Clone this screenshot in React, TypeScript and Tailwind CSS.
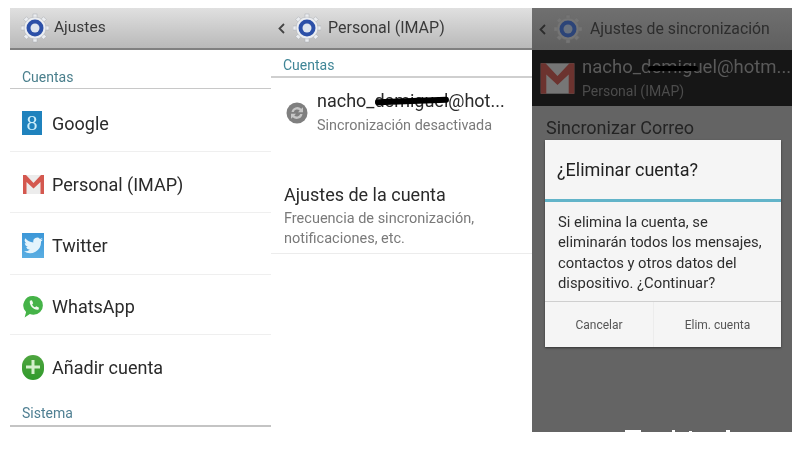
import type { ReactNode } from 'react';

const GearLogo = ({ dim = false }: { dim?: boolean }) => (
  <svg width="28" height="30" viewBox="0 0 28 30" className="shrink-0">
    <g fill={dim ? '#757575' : '#eceef1'} stroke={dim ? '#6a6a6a' : '#a9adb3'} strokeWidth="0.5">
      <rect x="12" y="1" width="4" height="28" />
      <rect x="0" y="13" width="28" height="4" />
      <rect x="12" y="1" width="4" height="28" transform="rotate(45 14 15)" />
      <rect x="12" y="1" width="4" height="28" transform="rotate(-45 14 15)" />
      <circle cx="14" cy="15" r="11" />
    </g>
    <circle cx="14" cy="15" r="8.500" fill={dim ? '#2c4478' : '#2c50a8'} />
    <circle cx="14" cy="15" r="4.500" fill={dim ? '#69727f' : '#dfe6ef'} />
  </svg>
);

const GoogleIcon = () => (
  <div className="w-5 h-6 bg-[#1f82bd] flex items-center justify-center text-[#cdeefa] text-[22px] leading-none font-['Liberation_Serif',serif]">
    8
  </div>
);

const GmailIcon = () => (
  <svg width="23" height="21" viewBox="0 0 23 21">
    <rect x="1" y="1" width="21" height="19" fill="#ececec" />
    <path d="M1 20V1h3l7.500 8 7.500-8h3v19h-3.500V8l-7 6.500-7-6.500v12z" fill="#d4584f" />
  </svg>
);

const TwitterIcon = () => (
  <div className="w-[22px] h-[25px] bg-gradient-to-b from-[#3c97d8] to-[#5aaee2] flex items-center justify-center">
    <svg width="19" height="17" viewBox="0 0 24 20" fill="#e4f4fc">
      <path d="M24 2.400a9.800 9.800 0 0 1-2.800.8 4.900 4.900 0 0 0 2.100-2.700 9.800 9.800 0 0 1-3.100 1.200A4.900 4.900 0 0 0 11.800 6.100 13.900 13.900 0 0 1 1.700.9a4.900 4.900 0 0 0 1.500 6.600 4.900 4.900 0 0 1-2.200-.6c0 2.400 1.700 4.400 3.900 4.900a4.900 4.900 0 0 1-2.200.1 4.900 4.900 0 0 0 4.600 3.400A9.900 9.900 0 0 1 0 17.300 13.900 13.900 0 0 0 21.500 5c1-.7 1.900-1.600 2.500-2.600z" />
    </svg>
  </div>
);

const WhatsAppIcon = () => (
  <svg width="21" height="24" viewBox="0 0 20 23" className="ml-[1px]">
    <path d="M10 1a9 9 0 0 1 0 18 9 9 0 0 1-3.500-.7L1.500 21.500l1.400-5.200A9 9 0 0 1 10 1z" fill="#45b348" />
    <path d="M6.500 5.500l2-.5 1.200 2.800-1 1.200c.6 1.300 1.500 2.200 2.800 2.800l1.200-1 2.600 1.300-.6 2c-4.500.7-9-4-8.200-8.600z" fill="#f1faf1" />
  </svg>
);

const AddIcon = () => (
  <div className="w-[22px] h-[25px] rounded-full bg-gradient-to-b from-[#4ea53f] to-[#2f9a2b] flex items-center justify-center">
    <svg width="16" height="16" viewBox="0 0 16 16" fill="#d4efcc">
      <rect x="6.500" y="1" width="3" height="14" />
      <rect x="1" y="6.500" width="14" height="3" />
    </svg>
  </div>
);

const SyncIcon = () => (
  <svg width="22" height="24" viewBox="0 0 22 24" className="shrink-0">
    <circle cx="11" cy="12" r="10.500" fill="#7f7f7f" />
    <path d="M5.500 11a5.800 5.800 0 0 1 9.800-3.200l1.700-1.600v5h-5l1.700-1.700A3.500 3.500 0 0 0 7.800 11zM16.500 13a5.800 5.800 0 0 1-9.800 3.200L5 17.800v-5h5l-1.700 1.700a3.500 3.500 0 0 0 5.900-1.500z" fill="#c6c6c6" />
  </svg>
);

const Chevron = ({ color }: { color: string }) => (
  <svg width="7" height="11" viewBox="0 0 7 11" fill="none" stroke={color} strokeWidth="1.800" className="shrink-0">
    <path d="M6 1L1.500 5.500 6 10" />
  </svg>
);

const TopBar = ({ children }: { children: ReactNode }) => (
  <div className="h-[42px] shrink-0 flex items-center bg-gradient-to-b from-[#e0e0e0] to-[#b9b9b9] border-b-2 border-[#808080]">
    {children}
  </div>
);

const accounts = [
  { name: 'Google', icon: <GoogleIcon />, row: 'h-[63px] pt-[6px]' },
  { name: 'Personal (IMAP)', icon: <GmailIcon />, row: 'h-[61px] pt-[4px]' },
  { name: 'Twitter', icon: <TwitterIcon />, row: 'h-[62px] pt-[4px]' },
  { name: 'WhatsApp', icon: <WhatsAppIcon />, row: 'h-[60px] pt-[4px]' },
];

const SettingsColumn = () => (
  <div className="w-[261px] flex flex-col">
    <TopBar>
      <div className="ml-[11px]"><GearLogo /></div>
      <span className="ml-[5px] text-[15.500px] text-[#3a3a3a]">Ajustes</span>
    </TopBar>
    <div className="h-[39px] shrink-0 flex items-end pl-3 pb-[1px] border-b border-[#c8c8c8]">
      <span className="text-[14px] leading-5 text-[#4a7f8c]">Cuentas</span>
    </div>
    {accounts.map((a) => (
      <div key={a.name} className={`${a.row} shrink-0 flex items-center pl-3 border-b border-[#efefef]`}>
        <div className="w-[30px] flex justify-start">{a.icon}</div>
        <span className="text-[18px] text-[#2a2a2a]">{a.name}</span>
      </div>
    ))}
    <div className="h-[62px] pt-[2px] shrink-0 flex items-center pl-3">
      <div className="w-[30px]"><AddIcon /></div>
      <span className="text-[18px] text-[#2a2a2a]">Añadir cuenta</span>
    </div>
    <div className="h-[30px] flex items-end pl-3 pb-[2px] border-b-2 border-[#c4c4c4]">
      <span className="text-[14px] leading-5 text-[#4f7f92]">Sistema</span>
    </div>
  </div>
);

const AccountColumn = () => (
  <div className="w-[261px] h-[424px] flex flex-col">
    <TopBar>
      <div className="ml-[7px]"><Chevron color="#444" /></div>
      <div className="ml-[8px]"><GearLogo /></div>
      <span className="ml-[7px] text-[16px] text-[#3a3a3a]">Personal (IMAP)</span>
    </TopBar>
    <div className="h-[28px] shrink-0 flex items-end pl-3 pb-[1px] border-b-2 border-[#cfcfcf]">
      <span className="text-[14px] leading-5 text-[#3f8596]">Cuentas</span>
    </div>
    <div className="flex items-center pl-[15px] pt-[11px]">
      <SyncIcon />
      <div className="ml-[9px] flex flex-col">
        <span className="relative text-[18px] leading-[24px] text-[#2a2a2a]">
          nacho_demiguel@hot...
          <span className="absolute left-[58px] top-[9px] w-[74px] h-[6px] bg-black -rotate-2 rounded-full" />
        </span>
        <span className="text-[14.400px] leading-[22px] mt-[2px] text-[#7a7a7a]">Sincronización desactivada</span>
      </div>
    </div>
    <div className="pl-[13px] mt-[45px] pb-[4px] border-b border-[#ececec] flex flex-col">
      <span className="text-[18px] leading-[26px] text-[#2a2a2a]">Ajustes de la cuenta</span>
      <span className="text-[14.500px] leading-[20px] mt-[1px] text-[#7a7a7a]">Frecuencia de sincronización,</span>
      <span className="text-[14.500px] leading-[20px] text-[#7a7a7a]">notificaciones, etc.</span>
    </div>
  </div>
);

const DeleteDialog = () => (
  <div className="absolute left-[13px] top-[132px] w-[236px] h-[207px] bg-[#f5f5f5] shadow-[0_1px_2px_rgba(0,0,0,0.5)] flex flex-col">
    <div className="h-[62px] shrink-0 flex items-center pl-3 border-b-[3px] border-[#62b4c9]">
      <span className="text-[18px] text-[#222]">¿Eliminar cuenta?</span>
    </div>
    <div className="h-[100px] shrink-0 pl-[13px] pt-[10px] text-[14.800px] leading-[20.300px] text-[#2e2e2e] border-b border-[#cfcfcf]">
      Si elimina la cuenta, se<br />
      eliminarán todos los mensajes,<br />
      contactos y otros datos del<br />
      dispositivo. ¿Continuar?
    </div>
    <div className="flex-1 flex items-center text-[12px] text-[#555]">
      <div className="w-[109px] h-full flex items-center justify-center border-r border-[#ececec]">Cancelar</div>
      <div className="flex-1 h-full flex items-center justify-center">Elim. cuenta</div>
    </div>
  </div>
);

const SyncColumn = () => (
  <div className="relative w-[260px] h-[424px] bg-[#646464] flex flex-col overflow-hidden">
    <div className="h-[42px] shrink-0 flex items-center bg-gradient-to-b from-[#707070] to-[#5f5f5f]">
      <div className="ml-[7px]"><Chevron color="#2c2c2c" /></div>
      <div className="ml-[8px]"><GearLogo dim /></div>
      <span className="ml-[8px] text-[15.800px] text-[#2d2d2d]">Ajustes de sincronización</span>
    </div>
    <div className="h-[56px] shrink-0 bg-[#161616] flex items-center pl-[1px]">
      <div className="opacity-45 scale-[1.6] w-[49px] flex justify-center"><GmailIcon /></div>
      <div className="flex flex-col">
        <span className="relative text-[18.500px] leading-[24px] text-[#5a5a5a] whitespace-nowrap">
          nacho_demiguel@hotm...
          <span className="absolute left-[66px] top-[11px] w-[50px] h-[5px] bg-black rounded-full" />
        </span>
        <span className="text-[14px] leading-[20px] mt-[2px] text-[#4c4c4c]">Personal (IMAP)</span>
      </div>
    </div>
    <div className="pl-[14px] pt-[9px] text-[18px] leading-[26px] text-[#242424]">Sincronizar Correo</div>
    <DeleteDialog />
    <div className="absolute left-[93px] bottom-0 w-[16px] h-[2px] bg-white" />
    <div className="absolute left-[140px] bottom-0 w-[3px] h-[2px] bg-white" />
    <div className="absolute left-[157px] bottom-0 w-[3px] h-[1px] bg-white" />
    <div className="absolute left-[194px] bottom-0 w-[4px] h-[2px] bg-white" />
  </div>
);

export default function App() {
  return (
    <div className="w-[800px] h-[450px] bg-white overflow-hidden pt-2 pl-[10px] flex items-start font-['Roboto',sans-serif] blur-[0.5px]">
      <SettingsColumn />
      <AccountColumn />
      <SyncColumn />
    </div>
  );
}
